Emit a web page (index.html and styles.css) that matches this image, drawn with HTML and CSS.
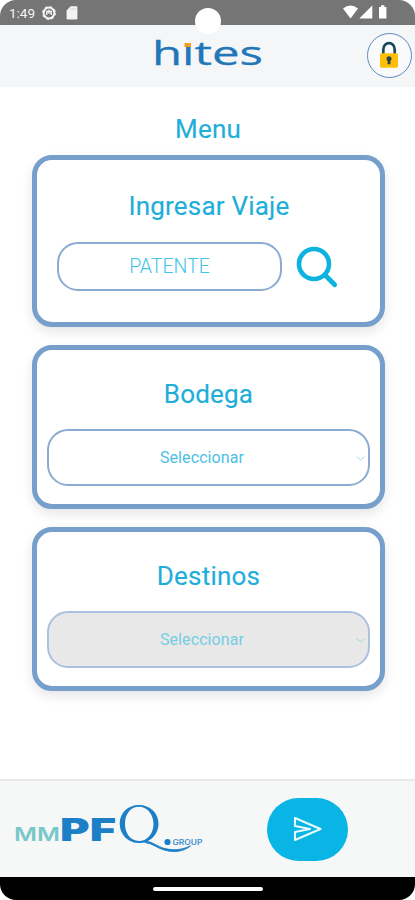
FILE: index.html
```html
<!DOCTYPE html>
<html lang="es">
<head>
<meta charset="utf-8">
<meta name="viewport" content="width=device-width, initial-scale=1">
<title>Menu</title>
<link rel="stylesheet" href="styles.css">
</head>
<body>
<div class="phone">
  <div class="status">
    <span class="time">1:49</span>
    <svg class="st-debug" width="14" height="14" viewBox="0 0 14 14"><circle cx="7" cy="7" r="5.4" fill="none" stroke="#f4f4f4" stroke-width="2"/><circle cx="7" cy="7" r="6.3" fill="none" stroke="#f4f4f4" stroke-width="1.2" stroke-dasharray="2.4 2.55"/><path d="M4 5.4h6M4.6 9V6.8h4.8V9M7 3.4v2" fill="none" stroke="#f4f4f4" stroke-width="1.3"/></svg>
    <svg class="st-card" width="12" height="14" viewBox="0 0 12 14"><path d="M4.6.3h5.6q1.2 0 1.2 1.2v10.8q0 1.2-1.2 1.2H1.8q-1.2 0-1.2-1.2V4.4z" fill="#f4f4f4"/><path d="M4.7 2v2.2M6.8 2v2.2M8.9 2v2.2" stroke="#ccc" stroke-width=".8"/></svg>
    <svg class="st-right" width="46" height="15" viewBox="0 0 46 15"><path d="M0 3.5Q7.5-2.4 15 3.5L7.5 13.5zM16.3 13.5L29.3.6v12.9zM36 2h2V.3h3.4V2h2v11.5H36z" fill="#fff"/></svg>
    <div class="camera"></div>
  </div>
  <header class="header">
    <svg class="brand" width="116" height="50" viewBox="0 0 116 50" role="img"><text x="-1" y="34" textLength="111" lengthAdjust="spacingAndGlyphs" class="brand-text">hıtes</text><rect x="31.5" y="12" width="6.4" height="4" fill="#f39c1f"/></svg>
    <div class="lock">
      <svg width="20" height="28" viewBox="0 0 20 28"><path d="M4.3 14V8.5a5.7 6.4 0 0 1 11.4 0V14" fill="none" stroke="#16475b" stroke-width="2.7"/><rect x="1" y="12.3" width="18" height="14.4" rx="1.6" fill="#fdc006"/><circle cx="10" cy="17.7" r="2.5" fill="#29424b"/><path d="M9 18h2.2l.4 5.2H8.5z" fill="#29424b"/></svg>
    </div>
  </header>
  <main class="main">
    <h1 class="title menu">Menu</h1>
    <section class="card trip">
      <h2 class="title">Ingresar Viaje</h2>
      <div class="search-row">
        <div class="field plate">PATENTE</div>
        <svg class="search" width="43" height="43" viewBox="0 0 43 43"><circle cx="18" cy="18" r="15" fill="none" stroke="#0eb2df" stroke-width="4.6"/><path d="M29 29L38.7 38.7" stroke="#0eb2df" stroke-width="4.8" stroke-linecap="round"/></svg>
      </div>
    </section>
    <section class="card">
      <h2 class="title">Bodega</h2>
      <div class="field select"><span>Seleccionar</span><svg width="9" height="5" viewBox="0 0 9 5"><path d="M.5.7l4 3.2 4-3.2" fill="none" stroke="#a5dfea"/></svg></div>
    </section>
    <section class="card">
      <h2 class="title">Destinos</h2>
      <div class="field select disabled"><span>Seleccionar</span><svg width="9" height="5" viewBox="0 0 9 5"><path d="M.5.7l4 3.2 4-3.2" fill="none" stroke="#a5d5de"/></svg></div>
    </section>
  </main>
  <footer class="footer">
    <svg class="group-logo" width="192" height="52" viewBox="0 0 192 52" role="img">
      <text x="0" y="37.8" textLength="46" lengthAdjust="spacingAndGlyphs" class="mm">MM</text>
      <text x="46" y="37.8" textLength="56" lengthAdjust="spacingAndGlyphs" class="pf">PF</text>
      <path d="M125 2c10.8 0 19.5 8 19.5 18.700S136 40 125 40s-19.300-8.500-19.300-19.300S114 2 125 2zm0 1.800c-8.600 0-14 7.500-14 17S116.400 38 125 38s14.500-7.800 14.500-17S133.600 3.800 125 3.800z" fill="#1c7fc7" fill-rule="evenodd"/>
      <path d="M131 38c7 .5 12.500 5.600 20 7.600 9 2.300 18 1 25.500-2.800-7 6.200-17 6.800-25.700 4.400C142.500 45 139 40.500 131 39.500z" fill="#1c7fc7" stroke="#1c7fc7" stroke-width=".9"/>
      <circle cx="153.500" cy="39" r="3.100" fill="#1c7fc7"/>
      <text x="158.500" y="42" textLength="30" lengthAdjust="spacingAndGlyphs" class="group">GROUP</text>
    </svg>
    <div class="send"><svg width="30" height="26" viewBox="0 0 30 26"><path d="M2 2L27.500 13 2 24V16L17 13 2 10z" fill="none" stroke="#e9faff" stroke-width="2.100" stroke-linejoin="round"/></svg></div>
  </footer>
  <div class="nav"><div class="pill"></div></div>
</div>
</body>
</html>
```
FILE: styles.css
```css
* { box-sizing: border-box; }
body { margin: 0; background: #fff; font-family: Roboto, sans-serif; }
.phone { width: 415px; height: 900px; display: flex; flex-direction: column; overflow: hidden; }
.status { height: 25px; flex: none; background: #757575; border-radius: 16px 16px 0 0; display: flex; align-items: center; position: relative; padding-left: 9px; }
.time { color: #f4f4f4; font-size: 13.5px; width: 33px; line-height: 25px; padding-top: 1px; }
.st-card { margin-left: 10px; }
.st-right { margin-left: auto; margin-right: 26px; }
.camera { position: absolute; left: 195px; top: 8px; width: 26px; height: 26px; border-radius: 50%; background: #fff; }
.header { height: 62px; flex: none; background: #f5f6f8; display: flex; align-items: center; padding: 0 3px 2px 153px; }
.brand { overflow: visible; margin-top: 2px; }
.brand-text { font-family: "Open Sans", sans-serif; font-weight: 500; font-size: 32px; fill: #2277b8; stroke: #2277b8; stroke-width: .3px; }
.lock { margin-left: auto; width: 45px; height: 45px; border: 1px solid #5f8abf; border-radius: 50%; display: flex; align-items: center; justify-content: center; background: #f8fafc; }
.lock svg { margin-right: 2px; }
.main { flex: 1; display: flex; flex-direction: column; align-items: center; padding-top: 27px; }
.title { margin: 0; color: #1eaeda; font-weight: 400; font-size: 26px; line-height: 30px; letter-spacing: .2px; text-align: center; -webkit-text-stroke: .15px #1eaeda; }
.menu { height: 41px; padding-left: 1px; }
.card { width: 353px; height: 164px; margin: 0 0 17.5px 2px; border: 5px solid #779fcb; border-radius: 20px; padding: 29px 10px 0; box-shadow: 0 5px 12px rgba(0,0,0,.1); background: #fff; }
.trip { height: 172px; margin-bottom: 18px; padding: 31px 19px 0 20px; }
.field { border: 2px solid #8babd2; border-radius: 21px; display: flex; align-items: center; justify-content: center; }
.search-row { display: flex; align-items: center; gap: 14px; margin-top: 21px; }
.plate { width: 225px; height: 49px; font-size: 19.5px; font-weight: 300; color: #42c4e7; }
.search { margin-top: 2px; }
.select { width: 323px; height: 57px; margin-top: 20px; font-size: 16px; letter-spacing: .1px; position: relative; padding-right: 13px; color: #4bbfe3; }
.select svg { position: absolute; right: 3px; top: 25px; }
.disabled { background: #e8e8e8; border-color: #a9c1de; color: #75cee3; }
.footer { height: 98px; flex: none; background: #f6f7f7; border-top: 2px solid #e9e9e9; display: flex; align-items: center; padding-left: 14px; }
.group-logo { overflow: visible; }
.mm { font-family: Inter, sans-serif; font-size: 19px; font-weight: 600; fill: #79c8c9; }
.pf { font-family: Inter, sans-serif; font-size: 31px; font-weight: 900; fill: #1c80c7; }
.group { font-family: Inter, sans-serif; font-size: 7px; font-weight: 600; fill: #3f92cc; }
.send { width: 81px; height: 63px; margin-left: 61px; border-radius: 32px; background: #08b5e5; display: flex; align-items: center; justify-content: center; }
.nav { height: 23px; flex: none; background: #000; border-radius: 0 0 16px 16px; display: flex; align-items: center; justify-content: center; }
.pill { width: 110px; height: 4px; border-radius: 2px; background: #fff; }
```
